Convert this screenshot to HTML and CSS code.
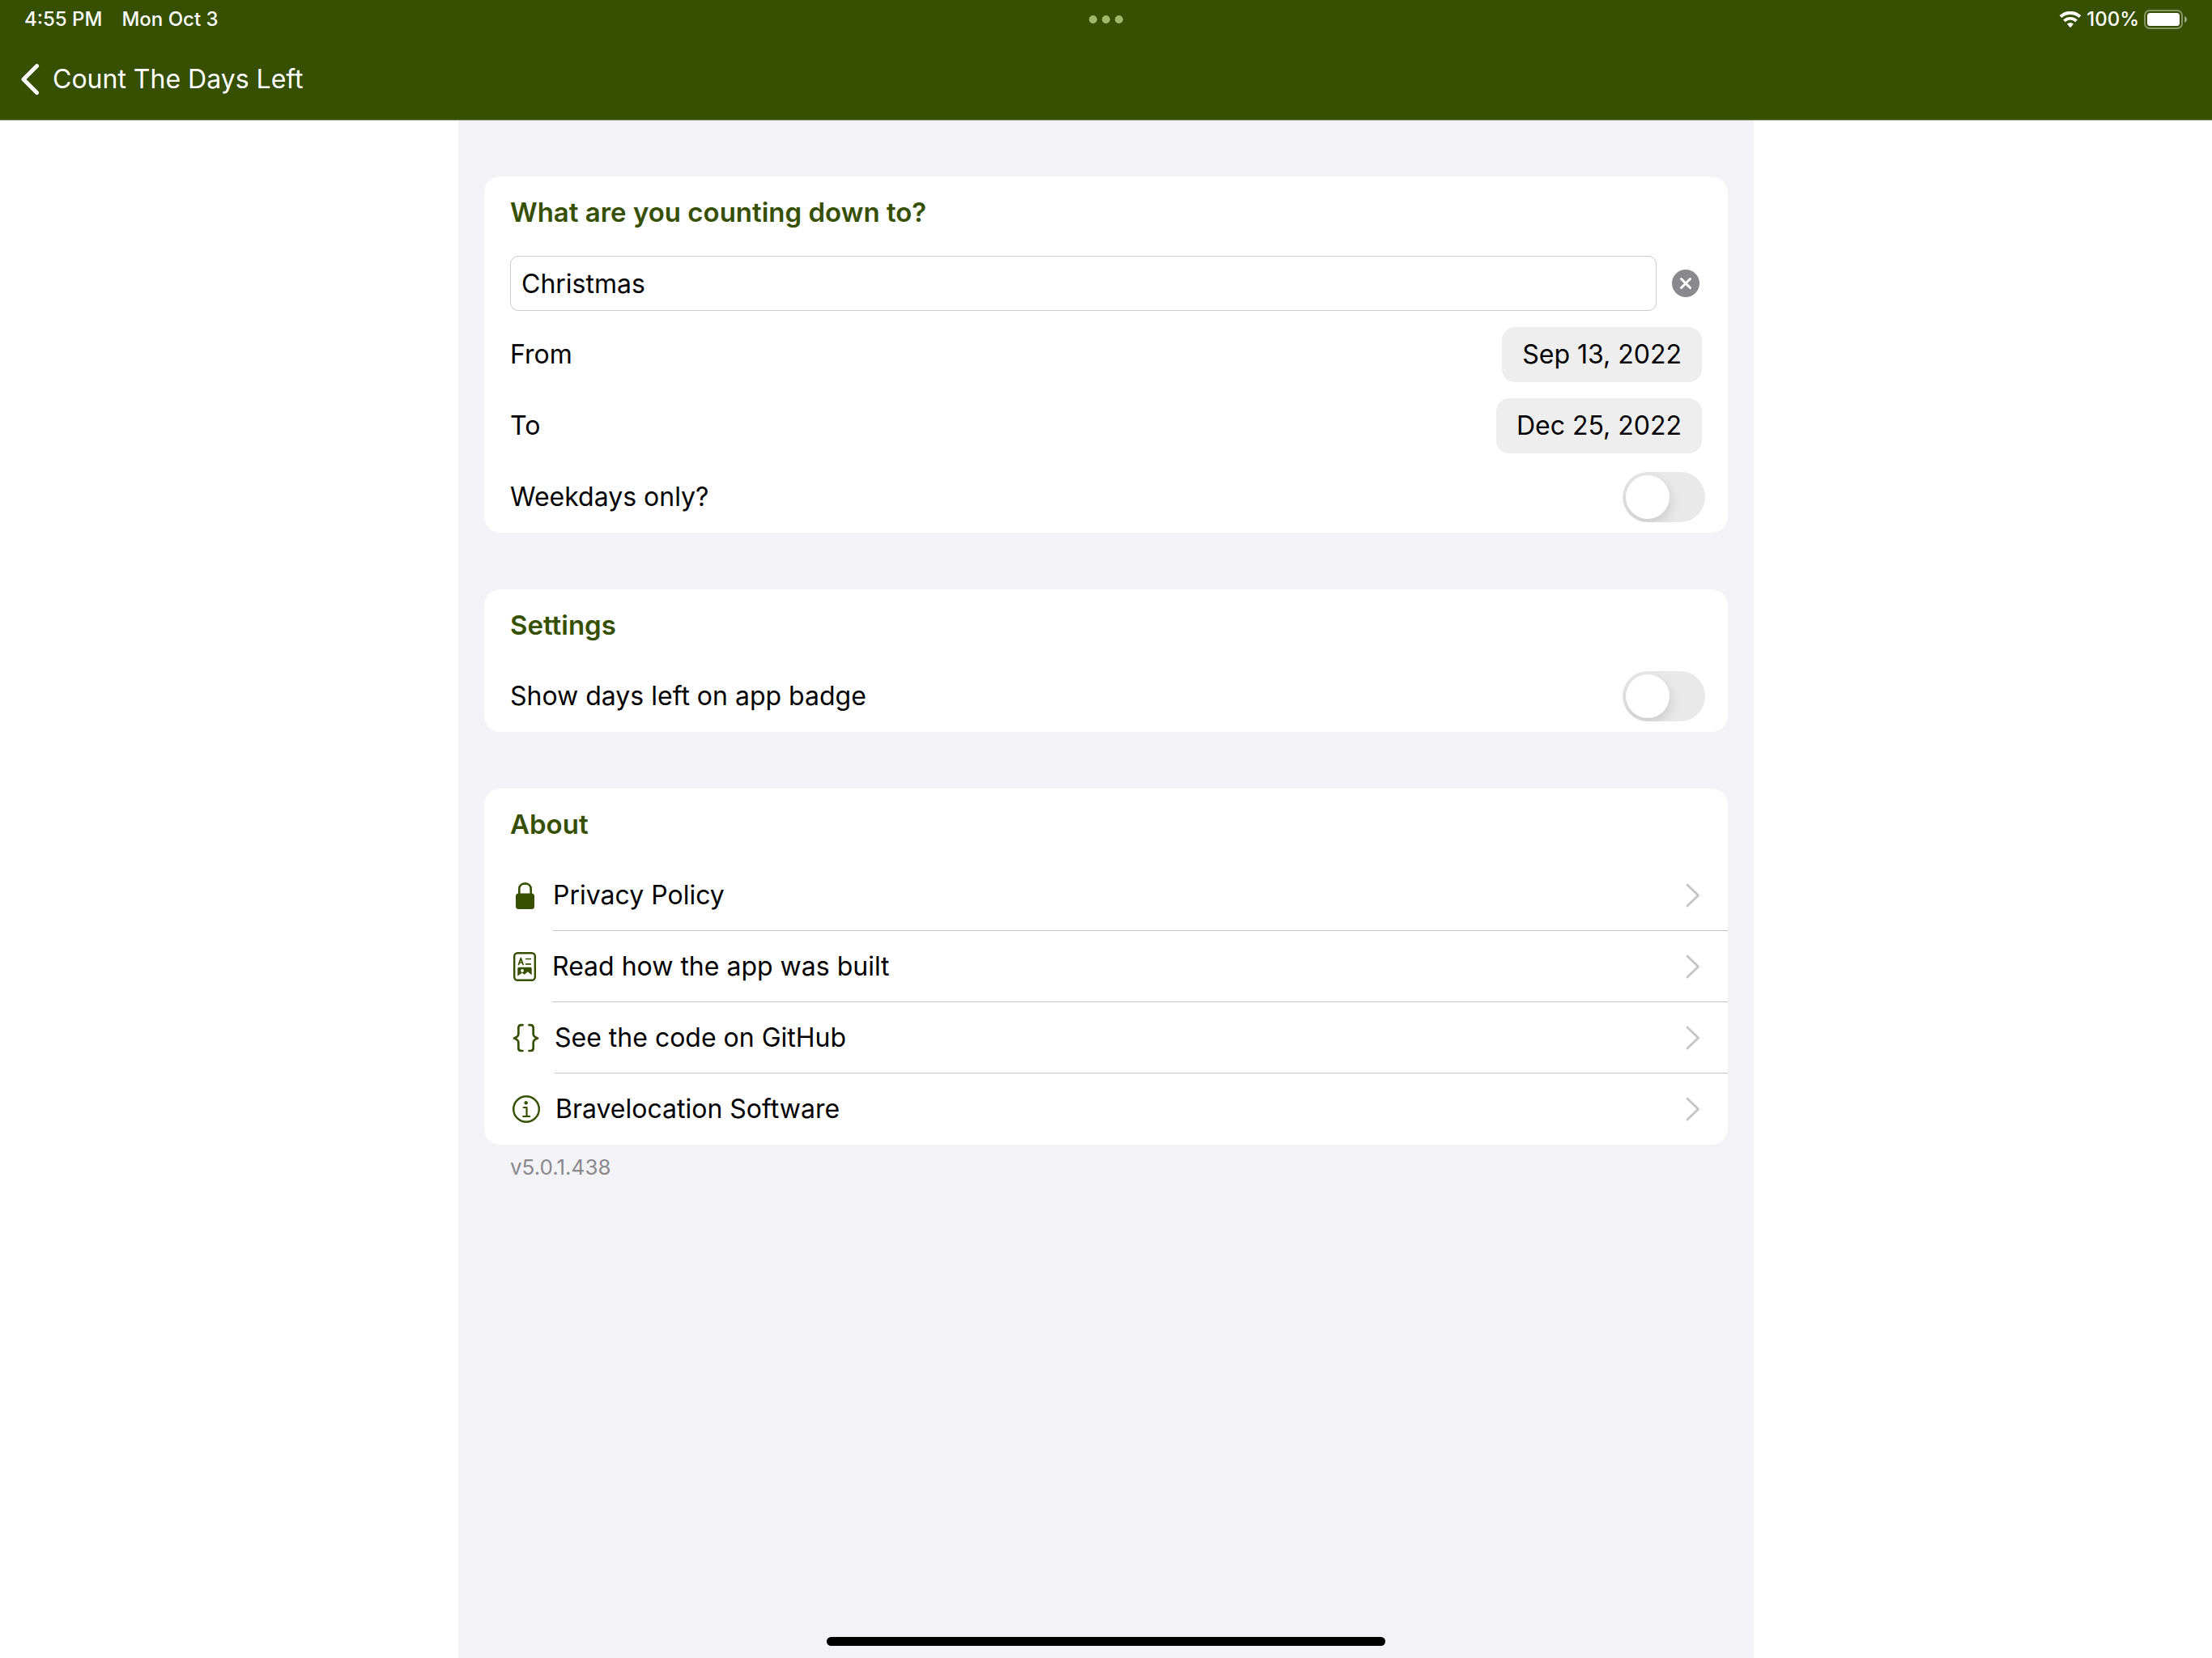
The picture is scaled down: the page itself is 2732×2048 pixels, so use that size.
FILE: index.html
```html
<!DOCTYPE html>
<html lang="en">
<head>
<meta charset="utf-8">
<meta name="viewport" content="width=device-width, initial-scale=1">
<title>Count The Days Left</title>
<link rel="stylesheet" href="styles.css">
</head>
<body>
<header class="header">
  <div class="status">
    <div class="status-left"><span>4:55 PM</span><span>Mon Oct 3</span></div>
    <div class="dots"><i class="dot"></i><i class="dot"></i><i class="dot"></i></div>
    <div class="status-right">
      <svg class="wifi" viewBox="0 0 28 20" aria-hidden="true">
        <path d="M2 6.6C9 0.3 19 0.3 26 6.6" fill="none" stroke="#fff" stroke-width="4"/>
        <path d="M6.4 11.7C11 7.8 17 7.8 21.6 11.7" fill="none" stroke="#fff" stroke-width="3.8"/>
        <path d="M10 15.6Q14 12.3 18 15.6L14.8 19.4Q14 20.2 13.2 19.4Z" fill="#fff"/>
      </svg>
      <span>100%</span>
      <svg class="battery" viewBox="0 0 54 24" aria-hidden="true">
        <rect x="1" y="1" width="46" height="22" rx="6" fill="none" stroke="#fff" stroke-opacity=".4" stroke-width="2"/>
        <rect x="4" y="4" width="40" height="16" rx="3.5" fill="#fff"/>
        <path d="M50 8c4 1.500 4 6.500 0 8z" fill="#fff" fill-opacity=".5"/>
      </svg>
    </div>
  </div>
  <nav class="nav">
    <a class="back" href="#">
      <svg class="back-icon" viewBox="0 0 24 40" aria-hidden="true"><path d="M20.500 3.500L4 20L20.500 36.500" fill="none" stroke="#fff" stroke-width="5" stroke-linecap="round" stroke-linejoin="round"/></svg>
      <span>Count The Days Left</span>
    </a>
  </nav>
</header>
<main class="sheet">
  <section class="card">
    <h2 class="row title"><label for="event">What are you counting down to?</label></h2>
    <div class="row">
      <input class="field" id="event" type="text" value="Christmas">
      <button class="clear" type="button" aria-label="Clear">
        <svg viewBox="0 0 34 34" aria-hidden="true"><circle cx="17" cy="17" r="17" fill="#8a8a8e"/><path d="M11.500 11.500L22.500 22.500M22.500 11.500L11.500 22.500" stroke="#fff" stroke-width="3" stroke-linecap="round"/></svg>
      </button>
    </div>
    <div class="row"><label for="from">From</label><button class="date" id="from" type="button">Sep 13, 2022</button></div>
    <div class="row"><label for="to">To</label><button class="date" id="to" type="button">Dec 25, 2022</button></div>
    <div class="row"><label for="weekdays">Weekdays only?</label><input class="switch" id="weekdays" type="checkbox"></div>
  </section>
  <section class="card">
    <h2 class="row title">Settings</h2>
    <div class="row"><label for="badge">Show days left on app badge</label><input class="switch" id="badge" type="checkbox"></div>
  </section>
  <section class="card">
    <h2 class="row title">About</h2>
    <a class="link" href="#">
      <svg class="icon lock" viewBox="0 0 37 40" aria-hidden="true"><rect x="7" y="17.500" width="23" height="19.500" rx="3.500" fill="#364f00"/><path d="M11.300 19V12C11.300 3.200 25.700 3.200 25.700 12V19" fill="none" stroke="#364f00" stroke-width="2.600"/></svg>
      <span class="link-body">Privacy Policy<svg class="chevron" viewBox="0 0 18 30" aria-hidden="true"><path d="M2 2L15.500 15L2 28" fill="none" stroke="#c4c4c6" stroke-width="2.800" stroke-linecap="round" stroke-linejoin="round"/></svg></span>
    </a>
    <a class="link" href="#">
      <svg class="icon doc" viewBox="0 0 36 40" aria-hidden="true"><rect x="5.200" y="3.200" width="25.600" height="33.600" rx="4" fill="none" stroke="#364f00" stroke-width="2.400"/><path d="M10.500 17.500L13.300 9.500L16.100 17.500M11.500 15H15.100M19.700 10.500H25.300M19.700 16.800H25.300" fill="none" stroke="#364f00" stroke-width="1.700" stroke-linecap="round" stroke-linejoin="round"/><path d="M9.300 22.300Q9.300 20.800 10.800 20.800H25.200Q26.700 20.800 26.700 22.300V30.500L21.800 26.200L17.800 29.800L14.800 27.800L9.300 31.500Z" fill="#364f00"/><circle cx="15" cy="25" r="1.900" fill="#fff"/></svg>
      <span class="link-body">Read how the app was built<svg class="chevron" viewBox="0 0 18 30" aria-hidden="true"><path d="M2 2L15.500 15L2 28" fill="none" stroke="#c4c4c6" stroke-width="2.800" stroke-linecap="round" stroke-linejoin="round"/></svg></span>
    </a>
    <a class="link" href="#">
      <svg class="icon braces" viewBox="0 0 39 40" aria-hidden="true"><path d="M15.500 4.200H13.800Q10.300 4.200 10.300 8V15.300Q10.300 18.600 5 20.500Q10.300 22.400 10.300 25.700V32.500Q10.300 36 13.800 36H15.500M23.500 4.200H25.200Q28.700 4.200 28.700 8V15.300Q28.700 18.600 34 20.500Q28.700 22.400 28.700 25.700V32.500Q28.700 36 25.200 36H23.500" fill="none" stroke="#364f00" stroke-width="2.700" stroke-linecap="round" stroke-linejoin="round"/></svg>
      <span class="link-body">See the code on GitHub<svg class="chevron" viewBox="0 0 18 30" aria-hidden="true"><path d="M2 2L15.500 15L2 28" fill="none" stroke="#c4c4c6" stroke-width="2.800" stroke-linecap="round" stroke-linejoin="round"/></svg></span>
    </a>
    <a class="link" href="#">
      <svg class="icon info" viewBox="0 0 40 40" aria-hidden="true"><circle cx="20" cy="20" r="15.800" fill="none" stroke="#364f00" stroke-width="2.400"/><circle cx="19.700" cy="12.200" r="2.200" fill="#364f00"/><path d="M16.700 18H20.500V29M16.200 29H24.200" fill="none" stroke="#364f00" stroke-width="2.200" stroke-linecap="round" stroke-linejoin="round"/></svg>
      <span class="link-body">Bravelocation Software<svg class="chevron" viewBox="0 0 18 30" aria-hidden="true"><path d="M2 2L15.500 15L2 28" fill="none" stroke="#c4c4c6" stroke-width="2.800" stroke-linecap="round" stroke-linejoin="round"/></svg></span>
    </a>
  </section>
  <p class="version">v5.0.1.438</p>
  <div class="home-bar"></div>
</main>
</body>
</html>
```
FILE: styles.css
```css
* {
  box-sizing: border-box;
}

body {
  margin: 0;
  min-height: 100vh;
  display: flex;
  flex-direction: column;
  background: #fff;
  color: #000;
  font: 400 32px/40px Inter, "Liberation Sans", sans-serif;
}

svg {
  display: block;
  flex: none;
}

/* Header */
.header {
  background: #364f00;
  border-bottom: 1px solid #a6ad98;
  color: #fff;
}

.status {
  display: grid;
  grid-template-columns: 1fr auto 1fr;
  align-items: center;
  height: 48px;
  padding: 0 30px;
  font-size: 24px;
  font-weight: 500;
}

.status-left,
.status-right {
  display: flex;
  align-items: center;
}

.status-left {
  gap: 24px;
}

.status-right {
  justify-content: flex-end;
  gap: 6px;
}

.wifi {
  width: 28px;
  height: 20px;
}

.battery {
  width: 54px;
  height: 24px;
}

.dots {
  display: flex;
  gap: 6px;
}

.dot {
  width: 10px;
  height: 10px;
  border-radius: 50%;
  background: #9fb868;
}

.nav {
  display: flex;
  align-items: center;
  height: 100px;
  padding-left: 25px;
}

.back {
  display: flex;
  align-items: center;
  gap: 16px;
  color: inherit;
  text-decoration: none;
}

.back-icon {
  width: 24px;
  height: 40px;
}

/* Settings sheet */
.sheet {
  flex: 1;
  display: flex;
  flex-direction: column;
  width: 100%;
  max-width: 1600px;
  margin: 0 auto;
  padding: 69px 32px 15px;
  background: #f2f2f7;
}

.card {
  border-radius: 20px;
  background: #fff;
}

.card + .card {
  margin-top: 70px;
}

.row {
  display: flex;
  align-items: center;
  justify-content: space-between;
  height: 88px;
  padding: 0 32px;
}

.title {
  margin: 0;
  color: #364f00;
  font-size: 33px;
  font-weight: 600;
}

.field {
  flex: 1;
  min-width: 0;
  height: 68px;
  padding: 0 13px;
  border: 1px solid #cbcbcb;
  border-radius: 10px;
  background: #fff;
  color: inherit;
  font: inherit;
}

.clear {
  margin: 0 3px 0 19px;
  padding: 0;
  border: 0;
  background: none;
}

.clear svg {
  width: 34px;
  height: 34px;
}

.date {
  height: 68px;
  padding: 0 25px;
  border: 0;
  border-radius: 16px;
  background: #eee;
  color: inherit;
  font: inherit;
}

.switch {
  appearance: none;
  display: flex;
  align-items: center;
  width: 102px;
  height: 62px;
  margin: 0 -4px 0 0;
  padding: 4px;
  overflow: hidden;
  border-radius: 31px;
  background: #e9e9ea;
}

.switch::before {
  content: "";
  width: 54px;
  height: 54px;
  border-radius: 50%;
  background: #fff;
  box-shadow: 0 6px 16px rgba(0, 0, 0, 0.15);
}

.switch:checked {
  justify-content: flex-end;
  background: #364f00;
}

.link {
  display: flex;
  align-items: center;
  gap: 16px;
  height: 88px;
  padding-left: 32px;
  color: inherit;
  text-decoration: none;
}

.link-body {
  flex: 1;
  display: flex;
  align-items: center;
  justify-content: space-between;
  height: 88px;
  padding-right: 34px;
  border-bottom: 1px solid #c6c6c8;
}

.link:last-child .link-body {
  border-bottom-color: transparent;
}

.icon {
  height: 40px;
}

.lock {
  width: 37px;
}

.doc {
  width: 36px;
}

.braces {
  width: 39px;
}

.info {
  width: 40px;
}

.chevron {
  width: 18px;
  height: 30px;
}

.version {
  margin: 8px 32px;
  color: #8a8a8e;
  font-size: 26px;
}

.home-bar {
  width: 690px;
  max-width: 60%;
  height: 11px;
  margin: auto auto 0;
  border-radius: 6px;
  background: #000;
}
```
